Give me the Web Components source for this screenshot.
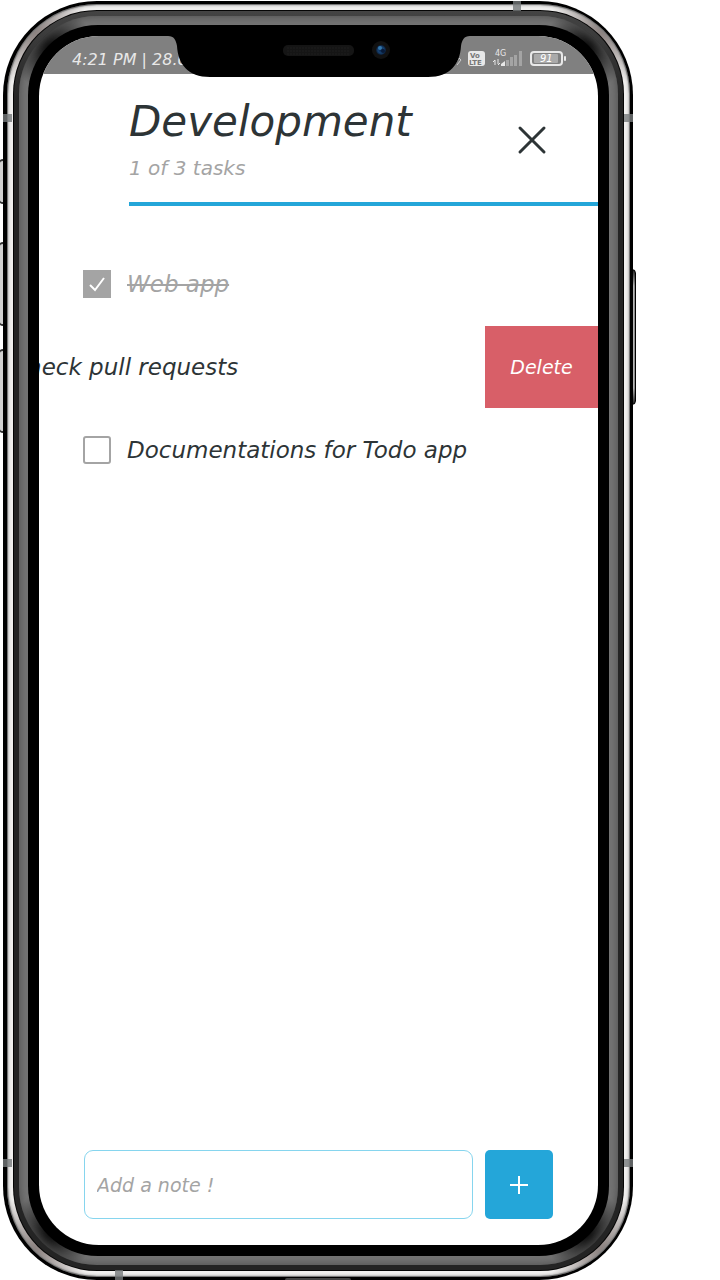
<!DOCTYPE html>
<html lang="en">
<head>
<meta charset="utf-8">
<meta name="viewport" content="width=device-width, initial-scale=1">
<title>Development – Todo</title>
<style>
  html { background: #fff; }
  body {
    margin: 0; box-sizing: border-box; min-height: 100vh;
    padding: 1px 87px 0 3px; display: flex;
    font-family: "DejaVu Sans", Verdana, sans-serif; font-style: italic; color: #2d3436;
  }
  phone-frame { flex: 1; min-width: 0; }
</style>
</head>
<body>
<phone-frame>
  <status-bar slot="status" time="4:21 PM | 28.0" battery="91"></status-bar>
  <list-header heading="Development" summary="1 of 3 tasks"></list-header>
  <task-list>
    <task-item done>Web app</task-item>
    <task-item swiped>Check pull requests</task-item>
    <task-item>Documentations for Todo app</task-item>
  </task-list>
  <note-form></note-form>
</phone-frame>

<script>
function define(name, render) {
  customElements.define(name, class extends HTMLElement {
    connectedCallback() {
      if (this.shadowRoot) return;
      this.attachShadow({ mode: 'open' }).innerHTML =
        '<style>:host,*,*::before,*::after{box-sizing:border-box}</style>' + render(this);
    }
  });
}

define('phone-frame', () => `
  <style>
    :host { display: flex; position: relative; }
    div { display: flex; flex: 1; min-width: 0; }
    .edge { background: #000; border-radius: 94px; padding: 3px 3px 3px 4px; position: relative; }
    .chrome { border-radius: 90px; padding: 6px;
      background:
        radial-gradient(circle at 26px 26px, #867c7a 0, #867c7a00 56px) 0 0 / 90px 90px no-repeat,
        radial-gradient(circle at 64px 26px, #867c7a 0, #867c7a00 56px) 100% 0 / 90px 90px no-repeat,
        radial-gradient(circle at 26px 64px, #867c7a 0, #867c7a00 56px) 0 100% / 90px 90px no-repeat,
        radial-gradient(circle at 64px 64px, #867c7a 0, #867c7a00 56px) 100% 100% / 90px 90px no-repeat, #f0efee;
      box-shadow: inset 0 0 0 1px #777, inset 0 0 3px 1px #888; }
    .line { border-radius: 84px; padding: 1px; background: #050505; }
    .band { border-radius: 83px; padding: 5px; background: linear-gradient(#444, #242424 90px); }
    .bevel { border-radius: 78px; padding: 9px;
      background:
        radial-gradient(circle at 34px 34px, #000 0, #0000 42px) 0 0 / 90px 90px no-repeat,
        radial-gradient(circle at 56px 34px, #000 0, #0000 42px) 100% 0 / 90px 90px no-repeat,
        radial-gradient(circle at 34px 56px, #000 0, #0000 42px) 0 100% / 90px 90px no-repeat,
        radial-gradient(circle at 56px 56px, #000 0, #0000 42px) 100% 100% / 90px 90px no-repeat, #747474;
      box-shadow: inset 0 0 8px #4a4a4a; }
    .bezel { border-radius: 70px; padding: 11px; background: #000; }
    .screen { flex-direction: column; position: relative; overflow: hidden; background: #fff; border-radius: 60px; }
    .notch { position: absolute; top: 0; left: 50%; margin-left: -151px; }
    i { position: absolute; }
    .key { border: solid #333; border-width: 2px 1px; background: #d0d0d0; left: -4px; width: 6px; border-radius: 4px 0 0 4px; }
    .key.right { left: auto; right: -3px; border-radius: 0 4px 4px 0; border: 1px solid #000;
      background: linear-gradient(#222, #2220 16px, #2220 calc(100% - 16px), #222), linear-gradient(90deg, #777, #ccc 50%, #777); }
    .mark { background: #777a7c; opacity: .8; }
    .side { width: 9px; height: 8px; }
    .cap { width: 8px; height: 10px; }
    .port { background: #444; width: 66px; height: 2px; left: 50%; margin-left: -33px; bottom: 0; border-radius: 4px 4px 0 0; }
  </style>
  <i class="key" style="top:158px;height:45px"></i>
  <i class="key" style="top:241px;height:84px"></i>
  <i class="key" style="top:348px;height:84px"></i>
  <i class="key right" style="top:268px;height:136px"></i>
  <div class="edge"><div class="chrome"><div class="line"><div class="band"><div class="bevel"><div class="bezel">
    <div class="screen">
      <slot name="status"></slot>
      <slot></slot>
      <svg class="notch" width="302" height="42" viewBox="0 0 302 42" aria-hidden="true">
        <defs><radialGradient id="lens"><stop offset="0" stop-color="#0b2348"/><stop offset=".6" stop-color="#164272"/><stop offset="1" stop-color="#0c1c33"/></radialGradient></defs>
        <path d="M0 0C6 0 8 4 9 10C10 28 20 41 42 41H260C282 41 292 28 293 10C294 4 296 0 302 0Z"/>
        <rect x="115" y="9" width="71" height="11" rx="5" fill="#151515"/>
        <path d="M119 12H182M119 15H182M119 18H182" stroke="#1e1e1e" stroke-dasharray="2 1"/>
        <circle cx="213" cy="14" r="9" fill="#111"/>
        <circle cx="213" cy="14" r="5" fill="url(#lens)"/>
        <circle cx="212" cy="12" r="2" fill="#3377ab"/><circle cx="215" cy="15" r="2" fill="#081a38"/>
      </svg>
    </div>
  </div></div></div></div></div>
    <i class="mark side" style="top:113px;left:0"></i>
    <i class="mark side" style="top:113px;right:0"></i>
    <i class="mark side" style="bottom:113px;left:0"></i>
    <i class="mark side" style="bottom:113px;right:0"></i>
    <i class="mark cap" style="top:0;right:112px"></i>
    <i class="mark cap" style="bottom:0;left:112px"></i>
    <i class="port"></i>
  </div>`);

define('status-bar', el => `
  <style>
    :host { display: flex; align-items: center; justify-content: space-between; height: 38px;
      padding: 8px 32px 0 33px; background: #808080; color: #e8e8e8; font-size: 16px; }
    svg { display: block; font-style: normal; }
  </style>
  <span>${el.getAttribute('time')}</span>
  <svg width="112" height="20" viewBox="0 0 112 20" fill="#e8e8e8" font-family="DejaVu Sans, sans-serif">
    <path d="M1 15L5 9L7 11L3 16" fill="none" stroke="#ccc"/>
    <rect x="14" y="2" width="17" height="15" rx="3"/>
    <text x="16" y="9" font-size="7" font-weight="700" fill="#777">Vo</text>
    <text x="15" y="16" font-size="7" font-weight="700" fill="#777">LTE</text>
    <text x="41" y="7" font-size="8">4G</text>
    <path d="M41 16V11M39 13L41 11M44 10V15M46 14L44 16" fill="none" stroke="#e8e8e8"/>
    <path d="M47 17V15L51 12V17Z"/>
    <path d="M52 11h3v6h-3zM56 8h3v9h-3zM60 6h3v11h-3zM65 2h3v15h-3z" fill="#a4a4a4"/>
    <rect x="77" y="3" width="31" height="13" rx="3" fill="none" stroke="#e8e8e8" stroke-width="2"/>
    <rect x="80" y="5" width="24" height="9" rx="1" fill="#aaa"/>
    <rect x="110" y="7" width="2" height="5" rx="1"/>
    <text x="86" y="13" font-size="10" font-style="italic" fill="#fff">${el.getAttribute('battery')}</text>
  </svg>`);

define('list-header', el => `
  <style>
    :host { display: flex; justify-content: space-between; align-items: flex-start;
      margin: 22px 0 37px 90px; padding-right: 44px; height: 110px; border-bottom: 4px solid #24a6d9; }
    h1 { margin: 0; font-size: 42px; line-height: 52px; font-weight: 400; }
    p { margin: 8px 0 0; font-size: 20px; line-height: 24px; color: #a4a4a4; }
    button { margin-top: 22px; padding: 0; width: 44px; height: 44px; border: 0; background: none; color: inherit; }
    svg { display: block; margin: auto; }
  </style>
  <div>
    <h1>${el.getAttribute('heading')}</h1>
    <p>${el.getAttribute('summary')}</p>
  </div>
  <button type="button" aria-label="Close">
    <svg width="30" height="30" viewBox="0 0 30 30" fill="none" stroke="currentColor" stroke-width="3" stroke-linecap="round"><path d="M3 3L27 27M27 3L3 27"/></svg>
  </button>`);

define('task-list', () => `
  <style>:host { display: flex; flex-direction: column; gap: 1px; flex: 1; }</style><slot></slot>`);

define('task-item', el => `
  <style>
    :host { display: flex; justify-content: space-between; min-height: 82px; padding-left: 44px; font-size: 23px; }
    :host([swiped]) { padding-left: 0; margin-left: -72px; }
    label { display: flex; align-items: center; gap: 16px; white-space: nowrap; }
    .box { display: grid; }
    .box > * { grid-area: 1 / 1; }
    input { appearance: none; margin: 0; width: 28px; height: 28px; border: 2px solid #a4a4a4; border-radius: 3px; background: #fff; }
    input:checked { background: #a4a4a4; border-radius: 0; }
    svg { display: none; pointer-events: none; }
    input:checked + svg { display: block; }
    :host([done]) .text { color: #a4a4a4; text-decoration: line-through; }
    button { width: 113px; border: 0; padding: 0; background: #d85f68; color: #fff; font: inherit; font-size: 19px; }
  </style>
  <label><span class="box"><input type="checkbox" ${el.hasAttribute('done') ? 'checked' : ''}>
    <svg width="28" height="28" viewBox="0 0 28 28" fill="none" stroke="#fff" stroke-width="2"><path d="M7 15L12 20L21 8"/></svg></span>
    <span class="text"><slot></slot></span></label>
  ${el.hasAttribute('swiped') ? '<button type="button">Delete</button>' : ''}`);

define('note-form', () => `
  <style>
    form { display: flex; gap: 12px; padding: 0 45px 26px; }
    input { flex: 1; min-width: 0; height: 69px; padding: 0 12px; border: 1px solid #86d5ee; border-radius: 9px;
      background: #fff; color: inherit; font: inherit; font-size: 19px; outline: 0; }
    input::placeholder { color: #a4a4a4; opacity: 1; }
    button { width: 68px; height: 69px; padding: 0; border: 0; border-radius: 5px; background: #24a6d9; }
    svg { display: block; margin: auto; }
  </style>
  <form>
    <input type="text" placeholder="Add a note !" aria-label="Add a note">
    <button type="button" aria-label="Add"><svg width="18" height="18" viewBox="0 0 18 18" stroke="#fff" stroke-width="2"><path d="M9 0V18M0 9H18"/></svg></button>
  </form>`);
</script>
</body>
</html>
